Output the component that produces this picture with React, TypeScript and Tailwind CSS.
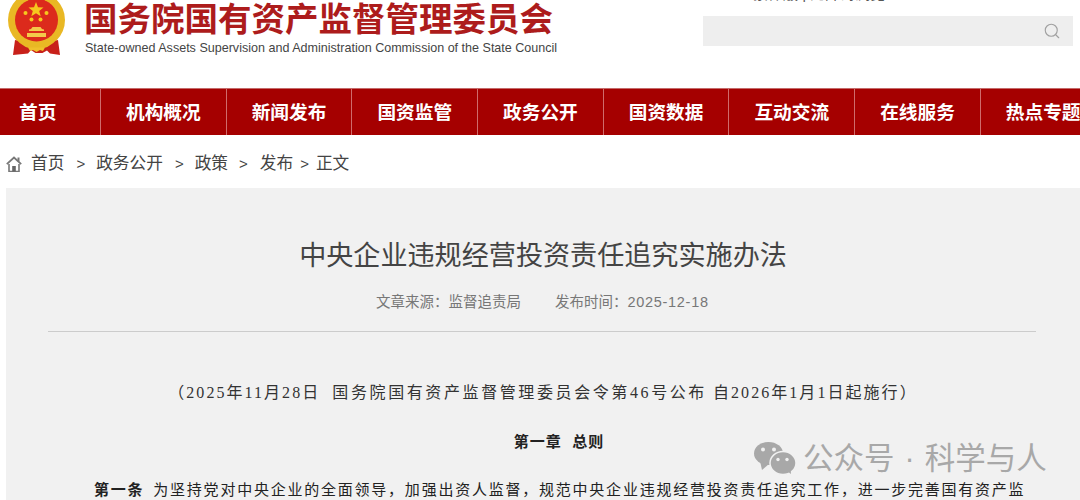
import { Search } from "lucide-react";

const navItems = ["机构概况", "新闻发布", "国资监管", "政务公开", "国资数据", "互动交流", "在线服务", "热点专题"];

const Emblem = () => (
  <svg viewBox="8 0 58 58" className="w-[58px] h-[58px]">
    <circle cx="36.500" cy="20" r="28.500" fill="#e9b824" />
    <circle cx="36.500" cy="20" r="21.500" fill="#dc2a1c" />
    <polygon points="36,2 38,7.200 43.500,7.500 39.200,11 40.700,16.300 36,13.300 31.300,16.300 32.800,11 28.500,7.500 34,7.200" fill="#f6c81e" />
    <circle cx="25.500" cy="13" r="2" fill="#f6c81e" />
    <circle cx="46.500" cy="13" r="2" fill="#f6c81e" />
    <circle cx="31.500" cy="19.500" r="2" fill="#f6c81e" />
    <circle cx="40.500" cy="19.500" r="2" fill="#f6c81e" />
    <path d="M29 31h15v-1.500l-2-.5-1.500-2h-8L31 29l-2 .5zM27 33h19v4H27z" fill="#f3c94a" />
    <path d="M15 40l6 1.500 7 4.500h17l7-4.500 6-1.500 2 15-10-1.500-3-3-4.500 2.500h-7L31 50l-3 3.500L13 55z" fill="#c8201a" />
    <path d="M17 38c5 6 12 9.500 19.500 9.500S51 44 56 38" fill="none" stroke="#e9b824" strokeWidth="3.500" />
    <path d="M28 47.500h17l-2 3.500-3-1-3.500 2-3.500-2-3 1z" fill="#efc02c" />
  </svg>
);

const App = () => {
  return (
    <div className="relative w-[1080px] h-[500px] overflow-hidden bg-white font-['Liberation_Sans','Noto_Sans_CJK_SC',sans-serif]">
      {/* header */}
      <div className="h-[88px] flex">
        <div className="pl-[8px] w-[84px] shrink-0">
          <Emblem />
        </div>
        <div className="w-[619px] shrink-0">
          <div className="h-[38px] mt-[1px] text-[33.5px] leading-[38px] font-bold text-[#ad1c1c] whitespace-nowrap">
            国务院国有资产监督管理委员会
          </div>
          <div className="mt-[1px] pl-[1px] text-[12.55px] leading-[16px] text-[#444] whitespace-nowrap">
            State-owned Assets Supervision and Administration Commission of the State Council
          </div>
        </div>
        <div className="w-[370px] shrink-0">
          <div className="h-[16px] mt-[-14px] mb-[14px] pl-[50px] text-[15px] leading-[16px] text-[#555] whitespace-nowrap">
            繁体版 | 无障碍浏览
          </div>
          <div className="h-[30px] bg-[#eeeeee] flex items-center justify-end pr-[12px]">
            <Search className="w-[18px] h-[18px] text-[#a0a0a0]" strokeWidth={1.5} />
          </div>
        </div>
      </div>

      {/* nav */}
      <div className="h-[47px] bg-[#a50000] flex text-white text-[18.7px] leading-[48px] font-bold whitespace-nowrap border-t border-[#c46a6a]">
        <div className="w-[101px] shrink-0 pl-[19px] border-r border-[#cf6b6b]">首页</div>
        {navItems.map((item) => (
          <div key={item} className="w-[125.7px] shrink-0 pl-[25px] border-r border-[#cf6b6b]">
            {item}
          </div>
        ))}
      </div>

      {/* breadcrumb */}
      <div className="h-[53px] pt-[5px] flex items-center pl-[6px] text-[16.7px] text-[#444] whitespace-nowrap">
        <svg viewBox="0 0 16 16" className="w-[16px] h-[16px] mr-[9px]">
          <path d="M0.800 8.200 8 1.500l7.200 6.700" fill="none" stroke="#777" strokeWidth="1.800" />
          <path d="M11.500 1.500h2v4h-2z" fill="#777" />
          <path d="M3 8v7.500h10V8" fill="none" stroke="#777" strokeWidth="1.600" />
          <path d="M6.200 15.500v-5.500h3.600v5.500z" fill="#666" />
        </svg>
        <span>首页</span>
        <span className="ml-[12px] mr-[11px] text-[15px]">&gt;</span>
        <span>政务公开</span>
        <span className="ml-[12px] mr-[11px] text-[15px]">&gt;</span>
        <span>政策</span>
        <span className="ml-[11px] mr-[12px] text-[15px]">&gt;</span>
        <span>发布</span>
        <span className="ml-[7px] mr-[7px] text-[15px]">&gt;</span>
        <span>正文</span>
      </div>

      {/* article */}
      <div className="ml-[6px] h-[320px] bg-[#f1f1f1] pt-[48px] overflow-hidden">
        <div className="text-center text-[27.1px] leading-[40px] text-[#444] whitespace-nowrap">
          中央企业违规经营投资责任追究实施办法
        </div>
        <div className="mt-[14px] h-[24px] flex pl-[370px] text-[14.5px] leading-[24px] text-[#777] whitespace-nowrap">
          <span className="w-[179px]">文章来源&#xFF1A;监督追责局</span>
          <span>
            发布时间&#xFF1A;<span className="tracking-[0.7px]">2025-12-18</span>
          </span>
        </div>
        <div className="mt-[17px] ml-[42px] w-[988px] border-t border-[#cccccc]" />
        <div className="mt-[49px] text-center text-[16px] tracking-[2.05px] leading-[24px] text-[#333] whitespace-pre font-['Liberation_Serif','Noto_Sans_CJK_SC',serif]">
          &#xFF08;2025年11月28日  <span className="tracking-[2.6px]">国务院国有资产监督管理委员会令第46号公布</span> 自2026年1月1日起施行&#xFF09;
        </div>
        <div className="mt-[25px] text-center pl-[32px] text-[15px] tracking-[1px] leading-[24px] font-bold text-[#222] whitespace-pre">
          第一章  总则
        </div>
        <div className="mt-[24px] pl-[88px] text-[15px] tracking-[1.77px] leading-[24px] text-[#222] whitespace-nowrap font-['Liberation_Serif','Noto_Sans_CJK_SC',serif]">
          <span className="font-bold mr-[9px]">第一条</span>
          为坚持党对中央企业的全面领导&#xFF0C;加强出资人监督&#xFF0C;规范中央企业违规经营投资责任追究工作&#xFF0C;进一步完善国有资产监
        </div>
      </div>

      {/* watermark */}
      <div className="absolute left-[754px] top-[439px] flex items-center text-[#a8a8a8] text-[30.5px] leading-[38px] whitespace-nowrap">
        <svg viewBox="0 0 42 33" className="w-[42px] h-[33px] mr-[7px]">
          <ellipse cx="14.500" cy="11.500" rx="14.500" ry="11.500" fill="#a8a8a8" />
          <path d="M6 19l2 9 7-6z" fill="#a8a8a8" />
          <ellipse cx="29" cy="21" rx="13" ry="11.500" fill="#a8a8a8" stroke="#f1f1f1" strokeWidth="1.500" />
          <path d="M33 29l4 3-.5-6z" fill="#a8a8a8" />
          <circle cx="9" cy="7.500" r="2" fill="#f1f1f1" />
          <circle cx="20" cy="7.500" r="2" fill="#f1f1f1" />
          <circle cx="24" cy="17.500" r="1.700" fill="#f1f1f1" />
          <circle cx="33" cy="17.500" r="1.700" fill="#f1f1f1" />
        </svg>
        <span>公众号</span>
        <span className="mx-[10px]">·</span>
        <span>科学与人</span>
      </div>
    </div>
  );
};

export default App;
